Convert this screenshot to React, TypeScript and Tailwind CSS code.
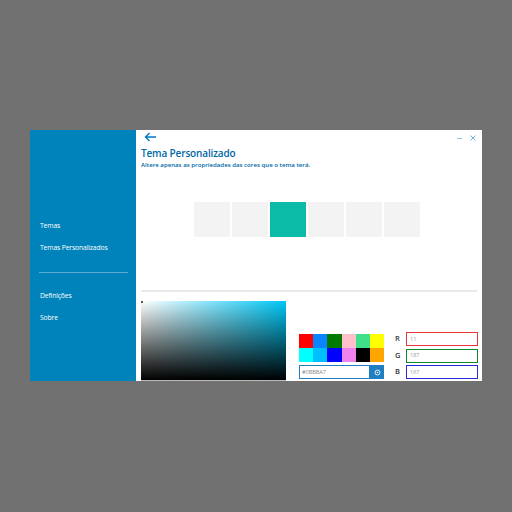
import React from "react";

const swatches = ["#f3f3f3", "#f3f3f3", "#0bbba7", "#f3f3f3", "#f3f3f3", "#f3f3f3"];

const palette = [
  "#ff0000",
  "#0a84ff",
  "#007a00",
  "#ffc0cb",
  "#3ee08a",
  "#ffff00",
  "#00ffff",
  "#00bfff",
  "#0000ff",
  "#ee82ee",
  "#000000",
  "#ffa500",
];

const channels = [
  { label: "R", value: "11", border: "border-[#e8343b]" },
  { label: "G", value: "187", border: "border-[#0d8a2c]" },
  { label: "B", value: "167", border: "border-[#2a2ae0]" },
];

export default function App() {
  return (
    <div
      className="w-[512px] h-[512px] bg-[#717171] flex items-start pt-[130px] pl-[30px]"
      style={{ fontFamily: '"Open Sans", "Noto Sans", sans-serif' }}
    >
      <div className="w-[452px] h-[251px] flex bg-white">
        {/* sidebar */}
        <div className="w-[106px] h-full bg-[#0083ba] flex flex-col pt-[91px] px-[9px] text-white text-[6.8px] tracking-[-0.15px]">
          <div className="pl-[1px] leading-[10px]">Temas</div>
          <div className="pl-[1px] mt-[12px] leading-[10px]">Temas Personalizados</div>
          <div className="h-[1px] bg-[#5aaad2] mt-[19px] w-[89px]" />
          <div className="pl-[1px] mt-[18px] leading-[10px]">Definições</div>
          <div className="pl-[1px] mt-[12px] leading-[10px]">Sobre</div>
        </div>
        <div className="w-[1px] h-full bg-[#d9d9d9]" />

        {/* main */}
        <div className="flex-1 flex flex-col pl-[5px] pr-[4px]">
          <div className="h-[14px] flex items-center justify-between">
            <svg width="13" height="10" viewBox="0 0 13 10" className="ml-[3px]">
              <path d="M12 5H1.5M5.5 1L1.5 5l4 4" fill="none" stroke="#0078c8" strokeWidth="1.4" />
            </svg>
            <div className="flex items-center gap-[8px] mr-[2px] mt-[2px]">
              <div className="w-[5px] h-[1px] bg-[#8cc2e6]" />
              <svg width="6" height="6" viewBox="0 0 6 6">
                <path d="M0.5 0.5l5 5M5.5 0.5l-5 5" stroke="#6fb2e0" strokeWidth="1" />
              </svg>
            </div>
          </div>
          <div className="text-[10px] font-semibold text-[#0067a6] leading-[14px] mt-[2px] tracking-[-0.15px]">
            Tema Personalizado
          </div>
          <div className="text-[6.1px] font-semibold text-[#0067a6] leading-[8px] mt-[1px]">
            Altere apenas as propriedades das cores que o tema terá.
          </div>

          <div className="flex justify-center gap-[2px] mt-[33px] pr-[6px]">
            {swatches.map((c, i) => (
              <div key={i} className="w-[36px] h-[35px]" style={{ backgroundColor: c }} />
            ))}
          </div>

          <div className="h-[2px] bg-[#e8e8e8] mt-[53px] mr-[1px]" />

          <div className="flex items-end mt-[9px]">
            <div className="relative w-[145px] h-[80px] border-b border-[#bbbbbb]">
              <div
                className="absolute inset-0"
                style={{ background: "linear-gradient(to right, #ffffff, #00c6f5)" }}
              />
              <div
                className="absolute inset-0"
                style={{ background: "linear-gradient(to bottom, rgba(0,0,0,0), #000000)" }}
              />
              <div className="absolute left-0 top-0 w-[2px] h-[2px] bg-[#555]" />
            </div>

            <div className="ml-[13px] flex flex-col w-[85px] mb-[2px]">
              <div className="grid grid-cols-6">
                {palette.map((c) => (
                  <div key={c} className="h-[14px]" style={{ backgroundColor: c }} />
                ))}
              </div>
              <div className="flex mt-[3px] h-[14px]">
                <div className="flex-1 border border-[#1f7fc0] flex items-center pl-[2px] text-[5.5px] text-[#888]">
                  #0BBBA7
                </div>
                <div className="w-[14px] bg-[#1f7fc0] flex items-center justify-center">
                  <svg width="7" height="7" viewBox="0 0 8 8">
                    <circle cx="4" cy="4" r="2.8" fill="none" stroke="#fff" strokeWidth="1" />
                    <circle cx="4" cy="4" r="0.9" fill="#fff" />
                  </svg>
                </div>
              </div>
            </div>

            <div className="ml-[11px] flex flex-col gap-[2.5px] mb-[2px]">
              {channels.map((ch) => (
                <div key={ch.label} className="flex items-center">
                  <div className="w-[11px] text-[7.5px] font-semibold text-[#333]">{ch.label}</div>
                  <div
                    className={`w-[72px] h-[14px] border ${ch.border} flex items-center pl-[3px] text-[5.5px] text-[#999]`}
                  >
                    {ch.value}
                  </div>
                </div>
              ))}
            </div>
          </div>
        </div>
      </div>
    </div>
  );
}
